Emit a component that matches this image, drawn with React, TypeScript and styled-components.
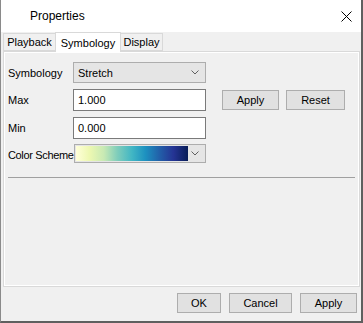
import React from 'react';
import styled, { createGlobalStyle } from 'styled-components';

const GlobalStyle = createGlobalStyle`
    html, body {
        margin: 0;
        padding: 0;
        background: #ffffff;
    }
    body {
        font-family: 'Liberation Sans', Arial, sans-serif;
        font-size: 11px;
        color: #000000;
    }
`;

const Window = styled('div')`
    width: 363px;
    height: 323px;
    box-sizing: border-box;
    display: flex;
    flex-direction: column;
    border-left: 1px solid #8a8a8a;
    border-right: 2px solid #5f5f5f;
    border-bottom: 2px solid #5f5f5f;
    background: #f0f0f0;
    overflow: hidden;
`;
const TitleBar = styled('div')`
    height: 32px;
    flex: none;
    display: flex;
    align-items: center;
    justify-content: space-between;
    padding: 0 9px 0 29px;
    background: #ffffff;
    font-size: 12px;
`;
const CloseIcon = styled('svg')`
    width: 11px;
    height: 11px;
`;
const Body = styled('div')`
    flex: 1;
    display: flex;
    flex-direction: column;
    padding: 0 1px 0 2px;
`;
const TabStrip = styled('div')`
    display: flex;
    align-items: flex-end;
    height: 19px;
`;
const Tab = styled('div')<{ active?: boolean; width: number }>`
    box-sizing: border-box;
    width: ${(p) => p.width}px;
    height: ${(p) => (p.active ? '20px' : '18px')};
    margin-bottom: ${(p) => (p.active ? '-1px' : '0')};
    display: flex;
    align-items: center;
    justify-content: center;
    background: ${(p) => (p.active ? '#ffffff' : '#f0f0f0')};
    border: 1px solid #d9d9d9;
    border-bottom: ${(p) => (p.active ? 'none' : '1px solid #d9d9d9')};
    position: relative;
    z-index: ${(p) => (p.active ? 1 : 0)};
    & + & {
        margin-left: -1px;
    }
`;
const Pane = styled('div')`
    height: 236px;
    box-sizing: border-box;
    border: 1px solid #d9d9d9;
    box-shadow: inset 1px 1px 0 #ffffff, inset -1px -1px 0 #ffffff;
    padding: 10px 5px 0 4px;
    display: flex;
    flex-direction: column;
`;
const Form = styled('div')`
    display: grid;
    grid-template-columns: 65px 133px 16px 57px 7px 59px;
    grid-template-rows: 21px 22px 22px 19px;
    row-gap: 6px;
    align-items: center;
`;
const Label = styled('span')<{ tight?: boolean }>`
    white-space: nowrap;
    letter-spacing: ${(p) => (p.tight ? '-0.35px' : 'normal')};
`;
const Combo = styled('div')`
    box-sizing: border-box;
    height: 21px;
    display: flex;
    align-items: center;
    justify-content: space-between;
    padding: 0 6px 0 4px;
    background: #e5e5e5;
    border: 1px solid #adadad;
`;
const Chevron = styled('svg')`
    width: 8px;
    height: 5px;
    flex: none;
`;
const TextInput = styled('div')`
    box-sizing: border-box;
    height: 22px;
    display: flex;
    align-items: center;
    padding: 0 4px;
    background: #ffffff;
    border: 1px solid #7a7a7a;
`;
const Button = styled('div')<{ width: number }>`
    box-sizing: border-box;
    width: ${(p) => p.width}px;
    height: 20px;
    display: flex;
    align-items: center;
    justify-content: center;
    background: #e1e1e1;
    border: 1px solid #adadad;
`;
const ColorCombo = styled(Combo)`
    height: 19px;
    padding: 1px 6px 1px 1px;
    margin: -1px 0 0 1px;
    align-self: start;
`;
const Gradient = styled('div')`
    width: 112px;
    height: 100%;
    background: linear-gradient(
        to right,
        #ffffd9 0%,
        #edf8b1 12%,
        #c7e9b4 25%,
        #7fcdbb 37%,
        #41b6c4 50%,
        #1d91c0 62%,
        #225ea8 75%,
        #253494 87%,
        #081d58 100%
    );
`;
const Separator = styled('div')`
    height: 1px;
    margin-top: 13px;
    width: 347px;
    background: #a0a0a0;
`;
const Footer = styled('div')`
    flex: 1;
    display: flex;
    justify-content: flex-end;
    align-items: flex-start;
    gap: 8px;
    padding: 6px 3px 0 0;
`;

const Caret = () => (
    <Chevron viewBox="0 0 8 5">
        <path d="M0.5 0.5 L4 4 L7.5 0.5" fill="none" stroke="#606060" strokeWidth="1" />
    </Chevron>
);

export default function App() {
    return (
        <>
            <GlobalStyle />
            <Window>
                <TitleBar>
                    <span>Properties</span>
                    <CloseIcon viewBox="0 0 11 11">
                        <path d="M0.5 0.5 L10.5 10.5 M10.5 0.5 L0.5 10.5" stroke="#000" strokeWidth="1" />
                    </CloseIcon>
                </TitleBar>
                <Body>
                    <TabStrip>
                        <Tab width={53}>Playback</Tab>
                        <Tab width={66} active>
                            Symbology
                        </Tab>
                        <Tab width={43}>Display</Tab>
                    </TabStrip>
                    <Pane>
                        <Form>
                            <Label>Symbology</Label>
                            <Combo>
                                <span>Stretch</span>
                                <Caret />
                            </Combo>
                            <span />
                            <span />
                            <span />
                            <span />

                            <Label>Max</Label>
                            <TextInput>1.000</TextInput>
                            <span />
                            <Button width={57}>Apply</Button>
                            <span />
                            <Button width={59}>Reset</Button>

                            <Label>Min</Label>
                            <TextInput>0.000</TextInput>
                            <span />
                            <span />
                            <span />
                            <span />

                            <Label tight>Color Scheme</Label>
                            <ColorCombo>
                                <Gradient />
                                <Caret />
                            </ColorCombo>
                        </Form>
                        <Separator />
                    </Pane>
                    <Footer>
                        <Button width={44}>OK</Button>
                        <Button width={63}>Cancel</Button>
                        <Button width={57}>Apply</Button>
                    </Footer>
                </Body>
            </Window>
        </>
    );
}
